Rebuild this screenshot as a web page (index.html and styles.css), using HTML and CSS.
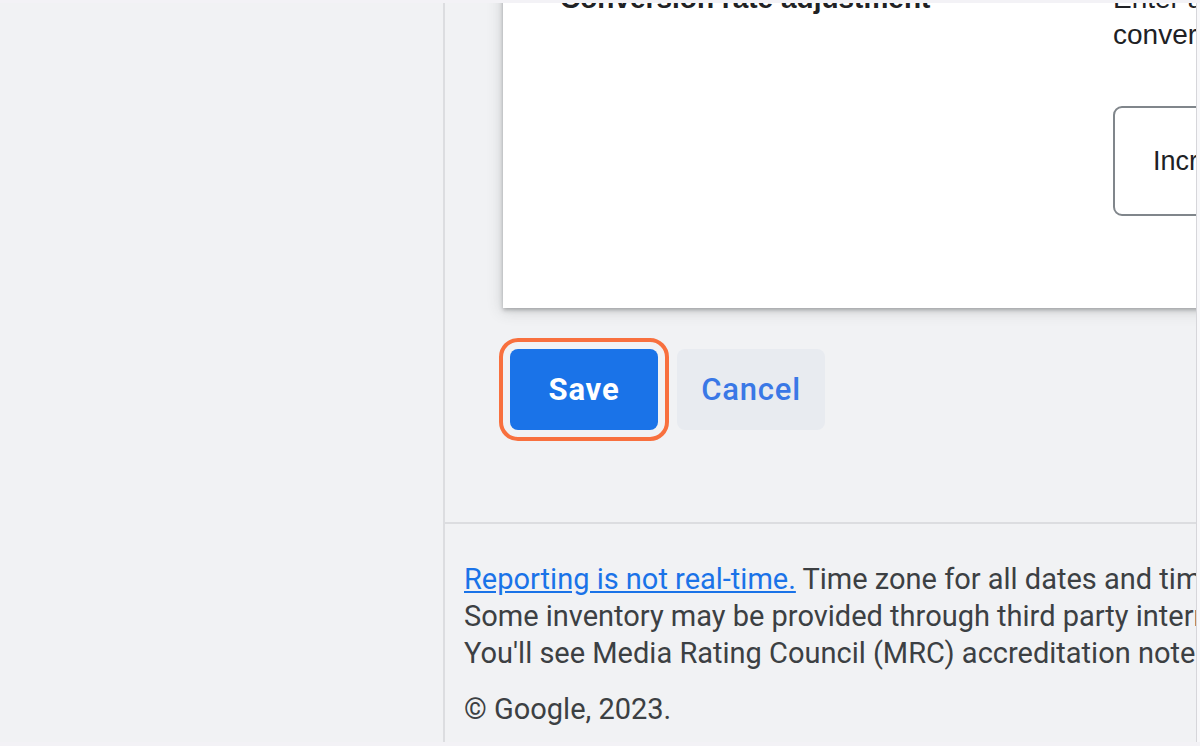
FILE: index.html
```html
<!DOCTYPE html>
<html lang="en">
<head>
    <meta charset="UTF-8">
    <meta name="viewport" content="width=device-width, initial-scale=1.0">
    <title>Conversion rate adjustment</title>
    <link rel="stylesheet" href="styles.css">
</head>
<body>

    <div class="app">
        <!-- Left navigation (empty at this scroll position) -->
        <div class="sidebar"></div>

        <div class="main">
            <div class="card-wrap">
                <div class="card">
                    <div class="field-row">
                        <div class="field-label">Conversion rate adjustment</div>
                        <div class="field-body">
                            <p class="field-help">Enter a percentage to increase or decrease the<br>conversion rate for this goal</p>
                            <div class="select-box">Increase by</div>
                        </div>
                    </div>
                </div>
            </div>

            <div class="actions">
                <button class="btn btn-primary">Save</button>
                <button class="btn btn-secondary">Cancel</button>
            </div>

            <div class="footer">
                <p class="footer-notes">
                    <a href="#" class="footer-link">Reporting is not real-time.</a> Time zone for all dates and times: (GMT-08:00) Pacific Time.<br>
                    Some inventory may be provided through third party intermediaries.<br>
                    You'll see Media Rating Council (MRC) accreditation notes in the column header's hover text.
                </p>
                <p class="copyright">&copy; Google, 2023.</p>
            </div>
        </div>

        <div class="edge"></div>
    </div>

</body>
</html>
```

FILE: styles.css
```css
* {
    margin: 0;
    padding: 0;
    box-sizing: border-box;
}

body {
    background-color: #f3f2f6;
    font-family: Roboto, "Liberation Sans", Arial, sans-serif;
    overflow: hidden;
}

.app {
    display: flex;
    height: 739px;
    margin-top: 3px;
    background-color: #f1f2f4;
    overflow: hidden;
}

.sidebar {
    width: 443px;
    flex-shrink: 0;
}

.main {
    flex: 1;
    min-width: 0;
    border-left: 2px solid #dcdde0;
    overflow: hidden;
}

.edge {
    width: 4px;
    flex-shrink: 0;
    border-left: 1px solid #d6d6da;
    background-color: #f8f8fa;
}

/* Card (scrolled so its top is above the view) */
.card-wrap {
    padding-left: 58px;
}

.card {
    margin-top: -34px;
    height: 339px;
    width: 900px;
    background-color: #ffffff;
    box-shadow: 0 2px 4px rgba(60, 64, 67, 0.35), 0 2px 14px 1px rgba(60, 64, 67, 0.2);
}

.field-row {
    display: flex;
    padding: 12px 0 0 57px;
}

.field-label {
    width: 553px;
    flex-shrink: 0;
    font-family: "Liberation Sans", Arial, sans-serif;
    font-weight: bold;
    font-size: 28px;
    line-height: 36px;
    color: #202124;
}

.field-body {
    flex: 1;
    min-width: 0;
}

.field-help {
    font-family: "Liberation Sans", Arial, sans-serif;
    font-size: 28px;
    line-height: 36px;
    color: #202124;
    white-space: nowrap;
}

.select-box {
    margin-top: 53px;
    height: 110px;
    width: 400px;
    border: 2px solid #80868b;
    border-radius: 9px;
    padding-left: 38px;
    display: flex;
    align-items: center;
    font-family: "Liberation Sans", Arial, sans-serif;
    font-size: 27px;
    color: #202124;
}

/* Buttons */
.actions {
    display: flex;
    gap: 19px;
    padding-left: 65px;
    margin-top: 41px;
}

.btn {
    height: 81px;
    width: 148px;
    border: none;
    border-radius: 8px;
    font-family: Roboto, Arial, sans-serif;
    font-size: 31px;
    letter-spacing: 0.8px;
    cursor: pointer;
}

.btn-primary {
    background-color: #1a73e8;
    color: #ffffff;
    font-weight: bold;
    outline: 4px solid #f8703e;
    outline-offset: 7px;
}

.btn-secondary {
    background-color: #e8ebf0;
    color: #3a78e6;
    font-weight: 500;
}

/* Footer */
.footer {
    margin-top: 92px;
    border-top: 2px solid #dcdde0;
    padding: 37px 0 0 19px;
    color: #3c4043;
    font-size: 29px;
    line-height: 37px;
    white-space: nowrap;
}

.footer-link {
    color: #1a73e8;
}

.copyright {
    margin-top: 19px;
}
```
